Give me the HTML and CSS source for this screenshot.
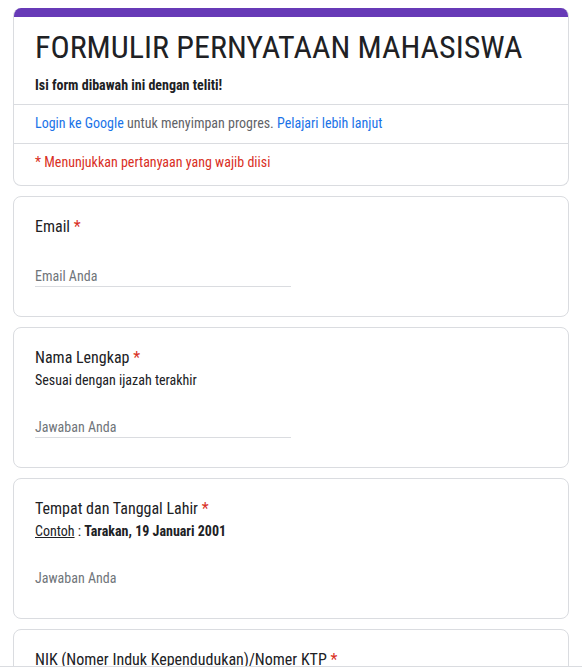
FILE: index.html
```html
<!DOCTYPE html>
<html lang="id">
<head>
    <meta charset="UTF-8">
    <meta name="viewport" content="width=device-width, initial-scale=1.0">
    <title>FORMULIR PERNYATAAN MAHASISWA</title>
    <link rel="stylesheet" href="styles.css">
</head>
<body>
    <div class="form">

        <div class="card header-card">
            <div class="accent"></div>
            <div class="header-body">
                <h1>FORMULIR PERNYATAAN MAHASISWA</h1>
                <p class="subtitle">Isi form dibawah ini dengan teliti!</p>
            </div>
            <div class="header-row">
                <a href="#" class="link">Login ke Google</a> untuk menyimpan progres. <a href="#" class="link">Pelajari lebih lanjut</a>
            </div>
            <div class="header-row required-note">* Menunjukkan pertanyaan yang wajib diisi</div>
        </div>

        <div class="card question">
            <div class="q-title">Email <span class="star">*</span></div>
            <div class="answer">Email Anda</div>
        </div>

        <div class="card question">
            <div class="q-title">Nama Lengkap <span class="star">*</span></div>
            <div class="q-desc">Sesuai dengan ijazah terakhir</div>
            <div class="answer">Jawaban Anda</div>
        </div>

        <div class="card question">
            <div class="q-title">Tempat dan Tanggal Lahir <span class="star">*</span></div>
            <div class="q-desc"><u>Contoh</u> : <b>Tarakan, 19 Januari 2001</b></div>
            <div class="answer no-line">Jawaban Anda</div>
        </div>

        <div class="card question">
            <div class="q-title">NIK (Nomer Induk Kependudukan)/Nomer KTP <span class="star">*</span></div>
            <div class="answer">Jawaban Anda</div>
        </div>

    </div>
    <div class="bottom-bar"></div>
</body>
</html>
```
FILE: styles.css
```css
body {
    font-family: Roboto, "Liberation Sans", sans-serif;
    font-stretch: 75%;
    background-color: #fff;
    color: #202124;
    margin: 0;
}

.form {
    padding: 8px 13px 40px;
    display: flex;
    flex-direction: column;
    gap: 10px;
}

.card {
    background-color: #fff;
    border: 1px solid #dadce0;
    border-radius: 8px;
}

.header-card {
    border-top: none;
    overflow: hidden;
}

.accent {
    height: 9px;
    background-color: #673ab7;
    margin: 0 -1px;
}

.header-body {
    padding: 10px 21px 9px;
}

.header-body h1 {
    font-size: 32px;
    font-weight: 400;
    line-height: 40px;
    margin: 0;
}

.subtitle {
    font-size: 14px;
    font-weight: 700;
    line-height: 20px;
    margin: 8px 0 0;
}

.header-row {
    border-top: 1px solid #dadce0;
    padding: 8px 21px 10px;
    font-size: 14px;
    line-height: 20px;
    color: #5f6368;
}

.link {
    color: #1a73e8;
    text-decoration: none;
}

.required-note {
    color: #d93025;
    padding-bottom: 13px;
}

.question {
    padding: 18px 21px 29px;
}

.q-title {
    font-size: 16px;
    line-height: 24px;
}

.star {
    color: #d93025;
}

.q-desc {
    font-size: 14px;
    line-height: 20px;
}

.answer {
    width: 256px;
    margin-top: 27px;
    font-size: 14px;
    line-height: 20px;
    color: #70757a;
    border-bottom: 1px solid #dadce0;
}

.answer.no-line {
    border-bottom-color: transparent;
}

.bottom-bar {
    position: fixed;
    left: 0;
    right: 0;
    bottom: 0;
    height: 5px;
    background-color: #fff;
    border-top: 1px solid #dadce0;
}
```
